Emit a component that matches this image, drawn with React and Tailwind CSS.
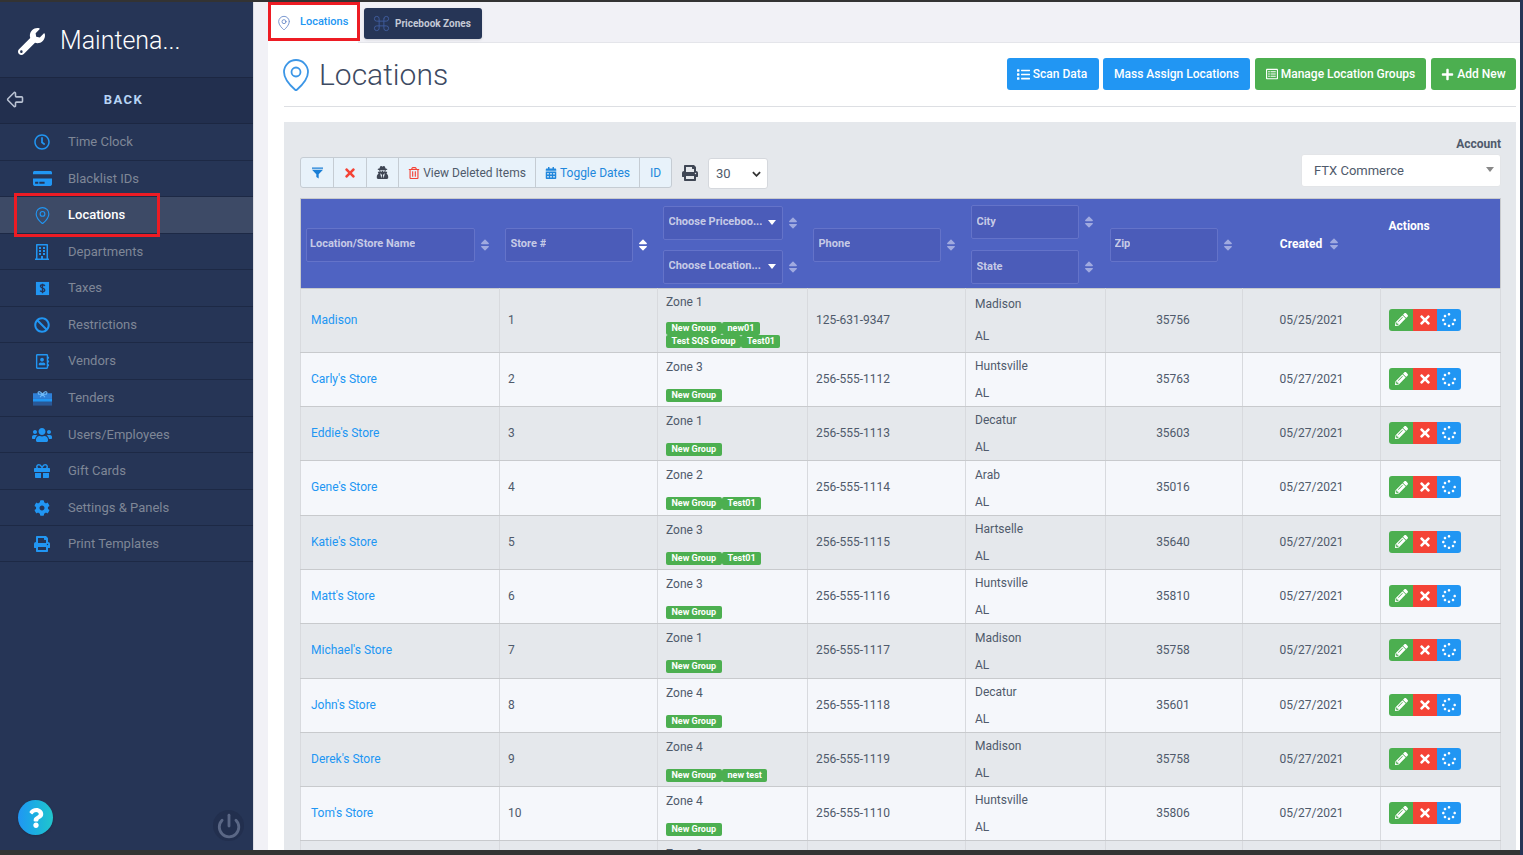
import { Command, MapPin, ArrowBigLeft, Power } from 'lucide-react';
import {
  FaWrench, FaRegClock, FaCreditCard, FaRegBuilding, FaBan, FaRegAddressBook, FaUsers, FaGift, FaCog, FaPrint,
  FaTimes, FaUserSecret, FaRegTrashAlt, FaCalendarAlt, FaList, FaRegListAlt, FaPlus, FaPencilAlt, FaSpinner,
  FaQuestion, FaSort,
} from 'react-icons/fa';

function TaxIcon() {
  return (
    <svg viewBox="0 0 16 16" className="w-[15px] h-[15px]">
      <rect x="1" y="1" width="14" height="14" fill="#2196f3" />
      <path d="M10.5 5.2C10 4.4 9 4 8 4 6.700 4 5.800 4.700 5.800 5.700 5.800 8 10.400 7 10.400 9.600 10.400 10.700 9.400 11.400 8 11.400 6.900 11.400 6 11 5.500 10.200M8 3v10" fill="none" stroke="#26355a" strokeWidth="1.400" />
    </svg>
  );
}

function TenderIcon() {
  return (
    <svg viewBox="0 0 20 16" className="w-[19px] h-[16px]">
      <path d="M0 3h20v6H0z" fill="#2f80d8" />
      <path d="M0 9h20v3H0z" fill="#2196f3" />
      <path d="M0 12h20v4H0z" fill="#2a5896" />
      <path d="M10 4C7 0 4 1 6 4zM10 4c3-4 6-3 4 0zM10 4 7.500 7M10 4l2.500 3" fill="none" stroke="#6db8f7" strokeWidth="1.200" />
    </svg>
  );
}

function FilterIcon() {
  return (
    <svg viewBox="0 0 14 14" className="w-[11px] h-[12px]">
      <path d="M0 0h14v1.500H0zM0 3h14L8.500 8.500V14l-3-2V8.500z" fill="#1b7fd6" />
    </svg>
  );
}

const menu = [
  { label: 'Time Clock', icon: <FaRegClock size={16} />, h: 'h-[37px]' },
  { label: 'Blacklist IDs', icon: <FaCreditCard size={19} />, h: 'h-[36px]' },
  { label: 'Locations', icon: <MapPin size={19} strokeWidth={1.400} />, h: 'h-[37px]', active: true },
  { label: 'Departments', icon: <FaRegBuilding size={16} />, h: 'h-[36px]' },
  { label: 'Taxes', icon: <TaxIcon />, h: 'h-[37px]' },
  { label: 'Restrictions', icon: <FaBan size={16} />, h: 'h-[36px]' },
  { label: 'Vendors', icon: <FaRegAddressBook size={15} />, h: 'h-[37px]' },
  { label: 'Tenders', icon: <TenderIcon />, h: 'h-[37px]' },
  { label: 'Users/Employees', icon: <FaUsers size={20} />, h: 'h-[36px]' },
  { label: 'Gift Cards', icon: <FaGift size={16} />, h: 'h-[37px]' },
  { label: 'Settings & Panels', icon: <FaCog size={16} />, h: 'h-[36px]' },
  { label: 'Print Templates', icon: <FaPrint size={16} />, h: 'h-[36px]' },
];

const rows = [
  { name: 'Madison', no: 1, zone: 'Zone 1', tags: [['New Group', 'new01'], ['Test SQS Group', 'Test01']], phone: '125-631-9347', city: 'Madison', zip: '35756', date: '05/25/2021', h: 'h-[64px]', tall: true },
  { name: "Carly's Store", no: 2, zone: 'Zone 3', tags: [['New Group']], phone: '256-555-1112', city: 'Huntsville', zip: '35763', date: '05/27/2021', h: 'h-[54px]' },
  { name: "Eddie's Store", no: 3, zone: 'Zone 1', tags: [['New Group']], phone: '256-555-1113', city: 'Decatur', zip: '35603', date: '05/27/2021', h: 'h-[54px]' },
  { name: "Gene's Store", no: 4, zone: 'Zone 2', tags: [['New Group', 'Test01']], phone: '256-555-1114', city: 'Arab', zip: '35016', date: '05/27/2021', h: 'h-[55px]' },
  { name: "Katie's Store", no: 5, zone: 'Zone 3', tags: [['New Group', 'Test01']], phone: '256-555-1115', city: 'Hartselle', zip: '35640', date: '05/27/2021', h: 'h-[54px]' },
  { name: "Matt's Store", no: 6, zone: 'Zone 3', tags: [['New Group']], phone: '256-555-1116', city: 'Huntsville', zip: '35810', date: '05/27/2021', h: 'h-[54px]' },
  { name: "Michael's Store", no: 7, zone: 'Zone 1', tags: [['New Group']], phone: '256-555-1117', city: 'Madison', zip: '35758', date: '05/27/2021', h: 'h-[55px]' },
  { name: "John's Store", no: 8, zone: 'Zone 4', tags: [['New Group']], phone: '256-555-1118', city: 'Decatur', zip: '35601', date: '05/27/2021', h: 'h-[54px]' },
  { name: "Derek's Store", no: 9, zone: 'Zone 4', tags: [['New Group', 'new test']], phone: '256-555-1119', city: 'Madison', zip: '35758', date: '05/27/2021', h: 'h-[54px]' },
  { name: "Tom's Store", no: 10, zone: 'Zone 4', tags: [['New Group']], phone: '256-555-1110', city: 'Huntsville', zip: '35806', date: '05/27/2021', h: 'h-[54px]' },
  { name: '', no: 11, zone: 'Zone 3', tags: [['New Group', 'new01'], ['Test01']], phone: '', city: 'Madison', zip: '', date: '', h: 'h-[64px]', tall: true, noActions: true },
];

function Sort({ light }) {
  return <FaSort size={14} className={light ? 'text-white shrink-0' : 'text-[#a0aae0] shrink-0'} />;
}

function HeadBox({ label, caret, w, sort, pad = 'px-[5px]' }) {
  return (
    <div className="flex items-center">
      <div className={`${w} ${pad} h-[34px] flex items-center justify-between bg-[#4b5cb9] border border-[#6473c9] rounded-[2px] text-[11px] font-bold text-[#c6cae6]`}>
        <span className="truncate">{label}</span>
        {caret && <span className="w-0 h-0 mr-[1px] border-x-[4px] border-x-transparent border-t-[5px] border-t-white" />}
      </div>
      <span className="ml-[3px] w-[14px] flex justify-center">
        <Sort light={sort} />
      </span>
    </div>
  );
}

function ToolBtn({ className, children }) {
  return (
    <div className={`flex items-center justify-center gap-[3px] h-full border-r border-[#c5ccd3] last:border-r-0 ${className}`}>
      {children}
    </div>
  );
}

function TopBtn({ color, w, icon, children }) {
  return (
    <button className={`${color} ${w} h-[32px] rounded-[3px] text-white text-[12px] font-medium flex items-center justify-center gap-[3px]`}>
      {icon}
      {children}
    </button>
  );
}

const td = 'border border-[#cfd2d6] border-x-[#d8dade] border-y-[#c8cacd] text-[12px] text-[#4f5a6b] align-middle';

export default function App() {
  return (
    <div className="relative w-[1523px] h-[855px] overflow-hidden flex bg-[#263556] font-['Roboto',sans-serif]">
      <div className="w-[1520px] h-full flex flex-col bg-white">
        <div className="h-[2px] bg-[#333333] shrink-0" />
        <div className="flex flex-1 min-h-0">
          <aside className="w-[253px] shrink-0 bg-[#263556] flex flex-col">
            <div className="h-[75px] shrink-0 flex items-center pt-[3px] pl-[18px] gap-[15px] text-white">
              <FaWrench size={27} />
              <span className="text-[25px] font-light">Maintena...</span>
            </div>
            <div className="h-[47px] shrink-0 relative flex items-center justify-center pr-[6px] pb-[2px] bg-[#222f4e] border-y border-[#1c2742]">
              <ArrowBigLeft size={21} strokeWidth={1.800} className="absolute left-[5px] text-[#b9c2d2]" />
              <span className="text-[13px] font-bold tracking-[1.500px] text-[#b7d4f5]">BACK</span>
            </div>
            {menu.map((m) => (
              <div key={m.label} className={`${m.h} shrink-0 flex items-center border-b border-[#1d2945] ${m.active ? 'bg-[#3d4a66]' : ''}`}>
                <span className="w-[84px] pl-[32px] pr-[32px] shrink-0 flex justify-center text-[#2196f3] overflow-visible">
                  <span className="flex justify-center w-[20px] shrink-0">{m.icon}</span>
                </span>
                <span className={`-ml-[16px] text-[13px] ${m.active ? 'text-white font-medium' : 'text-[#7f8797]'}`}>{m.label}</span>
              </div>
            ))}
            <div className="flex-1 relative">
              <div className="absolute left-[18px] bottom-[15px] w-[35px] h-[35px] rounded-full bg-gradient-to-r from-[#2196f3] to-[#22c6cc] flex items-center justify-center text-white shadow">
                <FaQuestion size={20} />
              </div>
              <div className="absolute right-[9px] bottom-[9px] w-[31px] h-[31px] rounded-full bg-[#222f4e] flex items-center justify-center text-[#5a6785]">
                <Power size={26} strokeWidth={2.600} />
              </div>
            </div>
          </aside>
          <div className="w-[15px] shrink-0 bg-[#f1f1f6] border-l border-[#dcdde3]" />
          <main className="flex-1 min-w-0 flex flex-col bg-white">
            <div className="h-[41px] shrink-0 flex bg-[#f1f1f6] border-b border-[#e4e5ea]">
              <div className="w-[90px] h-[41px] bg-white flex items-center gap-[8px] pl-[8px] text-[11px] font-medium text-[#2196f3]">
                <MapPin size={16} strokeWidth={1.200} className="text-[#5b7fc4]" />
                <span>Locations</span>
              </div>
              <div className="ml-[6px] mt-[6px] w-[118px] h-[31px] rounded-[3px] bg-[#263556] shadow flex items-center gap-[4px] pl-[8px] pb-[1px] text-[10px] font-bold text-[#c5cad6]">
                <Command size={19} strokeWidth={1.200} className="text-[#3f5c9c]" />
                <span>Pricebook Zones</span>
              </div>
            </div>
            <div className="flex-1 min-h-0 pl-[16px] pr-[4px] flex flex-col">
              <div className="h-[64px] shrink-0 flex items-start justify-between border-b border-[#dddfe3]">
                <div className="flex items-center gap-[5px] mt-[14px] -ml-[6px]">
                  <MapPin size={36} strokeWidth={1.200} className="text-[#3c96e6]" />
                  <h1 className="text-[30px] font-light text-[#3d4a62] leading-[34px]">Locations</h1>
                </div>
                <div className="flex mt-[15px]">
                  <TopBtn color="bg-[#2196f3]" w="w-[92px] pr-[2px]" icon={<FaList size={13} />}>Scan Data</TopBtn>
                  <TopBtn color="bg-[#2196f3]" w="w-[147px] ml-[4px]">Mass Assign Locations</TopBtn>
                  <TopBtn color="bg-[#4caf50]" w="w-[171px] ml-[5px]" icon={<FaRegListAlt size={12} />}>Manage Location Groups</TopBtn>
                  <TopBtn color="bg-[#4caf50]" w="w-[85px] ml-[5px]" icon={<FaPlus size={13} />}>Add New</TopBtn>
                </div>
              </div>
              <section className="mt-[15px] flex-1 min-h-0 bg-[#e5e8ec] pl-[16px] pr-[15px] overflow-hidden">
                <div className="h-[76px] relative">
                  <div className="absolute left-0 top-[35px] h-[31px] flex items-center">
                    <div className="h-[31px] flex rounded-[3px] border border-[#c5ccd3] bg-[#e8f2fa] text-[12px]">
                      <ToolBtn className="w-[33px]"><FilterIcon /></ToolBtn>
                      <ToolBtn className="w-[33px] text-[#f44336]"><FaTimes size={14} /></ToolBtn>
                      <ToolBtn className="w-[32px] text-[#3f4654]"><FaUserSecret size={13} /></ToolBtn>
                      <ToolBtn className="w-[137px] text-[#4f5a6b]"><FaRegTrashAlt size={12} className="text-[#f44336]" />View Deleted Items</ToolBtn>
                      <ToolBtn className="w-[104px] text-[#2187dc]"><FaCalendarAlt size={12} />Toggle Dates</ToolBtn>
                      <ToolBtn className="w-[31px] text-[#2187dc]">ID</ToolBtn>
                    </div>
                    <FaPrint size={16} className="ml-[10px] text-[#3f4654]" />
                    <div className="ml-[10px] mt-[2px] w-[60px] h-[31px] bg-white border border-[#d5d8dd] rounded-[3px] flex items-center justify-between pl-[7px] pr-[6px] text-[13px] text-[#4f5a6b]">
                      <span>30</span>
                      <svg viewBox="0 0 10 6" className="w-[9px] h-[6px]"><path d="M1 1l4 4 4-4" fill="none" stroke="#333" strokeWidth="2" /></svg>
                    </div>
                  </div>
                  <div className="absolute right-0 top-[15px] w-[200px] flex flex-col items-end">
                    <span className="text-[12px] font-bold text-[#4f5a6b] leading-[14px]">Account</span>
                    <div className="w-full h-[33px] mt-[3px] bg-white border border-[#e3e5e8] rounded-[3px] flex items-center justify-between pl-[12px] pr-[6px] text-[13px] text-[#4f5a6b]">
                      <span>FTX Commerce</span>
                      <span className="w-0 h-0 border-x-[4px] border-x-transparent border-t-[5px] border-t-[#888888] mb-[2px]" />
                    </div>
                  </div>
                </div>
                <table className="w-[1200px] table-fixed border-collapse">
                  <colgroup>
                    <col className="w-[199px]" />
                    <col className="w-[158px]" />
                    <col className="w-[150px]" />
                    <col className="w-[158px]" />
                    <col className="w-[140px]" />
                    <col className="w-[137px]" />
                    <col className="w-[138px]" />
                    <col className="w-[120px]" />
                  </colgroup>
                  <thead>
                    <tr className="h-[90px] bg-[#4f63c2] border border-[#c8cacd]">
                      <th className="pl-[5px] pt-[2px] font-normal text-left"><HeadBox label="Location/Store Name" w="w-[169px]" pad="px-[3px]" /></th>
                      <th className="pl-[5px] pt-[2px] font-normal text-left"><HeadBox label="Store #" w="w-[128px]" sort /></th>
                      <th className="pl-[5px] pt-[2px] font-normal text-left">
                        <div className="flex flex-col gap-[10px]">
                          <HeadBox label="Choose Priceboo..." w="w-[120px]" caret />
                          <HeadBox label="Choose Location..." w="w-[120px]" caret />
                        </div>
                      </th>
                      <th className="pl-[5px] pt-[2px] font-normal text-left"><HeadBox label="Phone" w="w-[128px]" /></th>
                      <th className="pl-[5px] pt-[2px] font-normal text-left">
                        <div className="flex flex-col gap-[11px]">
                          <HeadBox label="City" w="w-[108px]" />
                          <HeadBox label="State" w="w-[108px]" />
                        </div>
                      </th>
                      <th className="pl-[4px] pt-[2px] font-normal text-left"><HeadBox label="Zip" w="w-[108px]" pad="px-[4px]" /></th>
                      <th className="pr-[2px]">
                        <div className="flex items-center justify-center gap-[5px] text-[12px] font-bold text-white">
                          Created <Sort />
                        </div>
                      </th>
                      <th className="pl-[8px] pb-[35px] text-left text-[12px] font-bold text-white">Actions</th>
                    </tr>
                  </thead>
                  <tbody>
                    {rows.map((r) => (
                      <tr key={r.no} className={`${r.h} ${r.no % 2 ? 'bg-[#e5e8ec]' : 'bg-[#f5f7fb]'}`}>
                        <td className={`${td} pl-[10px] pb-[2px]`}><a className="text-[#2196f3]">{r.name}</a></td>
                        <td className={`${td} pl-[8px] pb-[2px]`}>{r.name && r.no}</td>
                        <td className={`${td} pl-[8px] pt-[1px]`}>
                          <div className="leading-[16px]">{r.zone}</div>
                          <div className={r.tall ? 'mt-[12px]' : 'mt-[14px]'}>
                            {r.tags.map((line) => (
                              <div key={line.join()} className="flex h-[13px] text-[9px] font-bold leading-[13px] text-white">
                                {line.map((t) => (
                                  <span key={t} className="bg-[#4caf50] rounded-[2px] px-[5.500px] mr-[0.500px]">{t}</span>
                                ))}
                              </div>
                            ))}
                          </div>
                        </td>
                        <td className={`${td} pl-[8px] pb-[2px]`}>{r.phone}</td>
                        <td className={`${td} pl-[9px]`}>
                          <div className={`leading-[16px] ${r.tall ? '-mt-[2px]' : ''}`}>{r.city}</div>
                          <div className={`leading-[16px] ${r.tall ? 'mt-[16px]' : 'mt-[11px]'}`}>AL</div>
                        </td>
                        <td className={`${td} text-center pb-[2px] pr-[2px]`}>{r.zip}</td>
                        <td className={`${td} text-center pb-[2px]`}>{r.date}</td>
                        <td className={`${td} pl-[8px] pb-[2px]`}>
                          {!r.noActions && (
                            <div className="flex w-[72px] h-[22px] rounded-[3px] overflow-hidden text-white">
                              <span className="w-[24px] bg-[#4caf50] flex items-center justify-center"><FaPencilAlt size={13} /></span>
                              <span className="w-[24px] bg-[#f44336] flex items-center justify-center"><FaTimes size={14} /></span>
                              <span className="w-[24px] bg-[#2196f3] flex items-center justify-center"><FaSpinner size={14} /></span>
                            </div>
                          )}
                        </td>
                      </tr>
                    ))}
                  </tbody>
                </table>
              </section>
            </div>
          </main>
        </div>
        <div className="h-[5px] bg-[#333333] shrink-0 relative z-10" />
      </div>
      <div className="absolute left-[14px] top-[193px] w-[146px] h-[44px] border-[3px] border-[#ed1c24]" />
      <div className="absolute left-[268px] top-[2px] w-[92px] h-[39px] border-[3px] border-[#ed1c24]" />
    </div>
  );
}
